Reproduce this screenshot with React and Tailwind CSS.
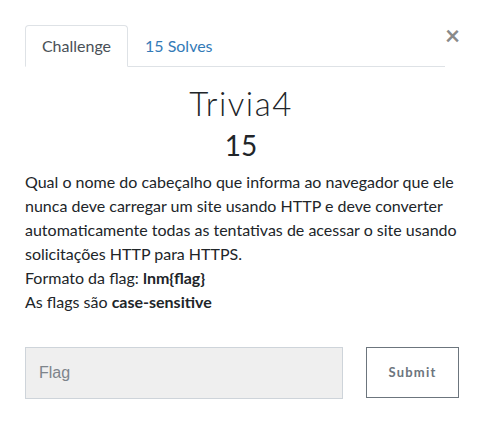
export default function App() {
  return (
    <div className="relative h-[436px] w-[482px] bg-white font-['Lato','Noto_Sans',sans-serif] text-[#212529]">
      <button className="absolute right-[22px] top-[22px] text-[26px] font-bold leading-none text-[#8a8a8a]">
        ×
      </button>

      <div className="px-[25px] pt-[25px]">
        <div className="flex w-[420px] border-b border-[#dee2e6]">
          <div className="-mb-px flex h-[42px] w-[103px] items-center justify-center rounded-t-[4px] border border-b-white border-[#dee2e6] bg-white text-[16px] text-[#495057]">
            Challenge
          </div>
          <div className="flex h-[41px] items-center px-[17px] text-[16px] text-[#337ab7]">15 Solves</div>
        </div>

        <div className="mt-[16px] text-center">
          <h2 className="text-[33px] font-light leading-[40px] tracking-[1.5px]">Trivia4</h2>
          <h3 className="text-[28px] font-normal leading-[44px]">15</h3>
        </div>

        <div className="mt-[3px] text-[16px] leading-[24px]">
          <p>
            Qual o nome do cabeçalho que informa ao navegador que ele nunca deve carregar um site usando HTTP e deve
            converter automaticamente todas as tentativas de acessar o site usando solicitações HTTP para HTTPS.
          </p>
          <p>
            Formato da flag: <strong className="font-bold">lnm{'{flag}'}</strong>
          </p>
          <p>
            As flags são <strong className="font-bold">case-sensitive</strong>
          </p>
        </div>

        <div className="mt-[33px] flex items-start">
          <input
            placeholder="Flag"
            className="h-[52px] w-[318px] shrink-0 border border-[#ced4da] bg-[#efefef] px-[13px] font-['Liberation_Sans',Arial,sans-serif] text-[16px] text-[#495057] outline-none placeholder:text-[#7d848b]"
          />
          <button className="ml-[23px] h-[51px] w-[93px] shrink-0 border border-[#6c757d] bg-white text-[13px] font-bold tracking-[1.2px] text-[#6c757d]">
            Submit
          </button>
        </div>
      </div>
    </div>
  )
}
